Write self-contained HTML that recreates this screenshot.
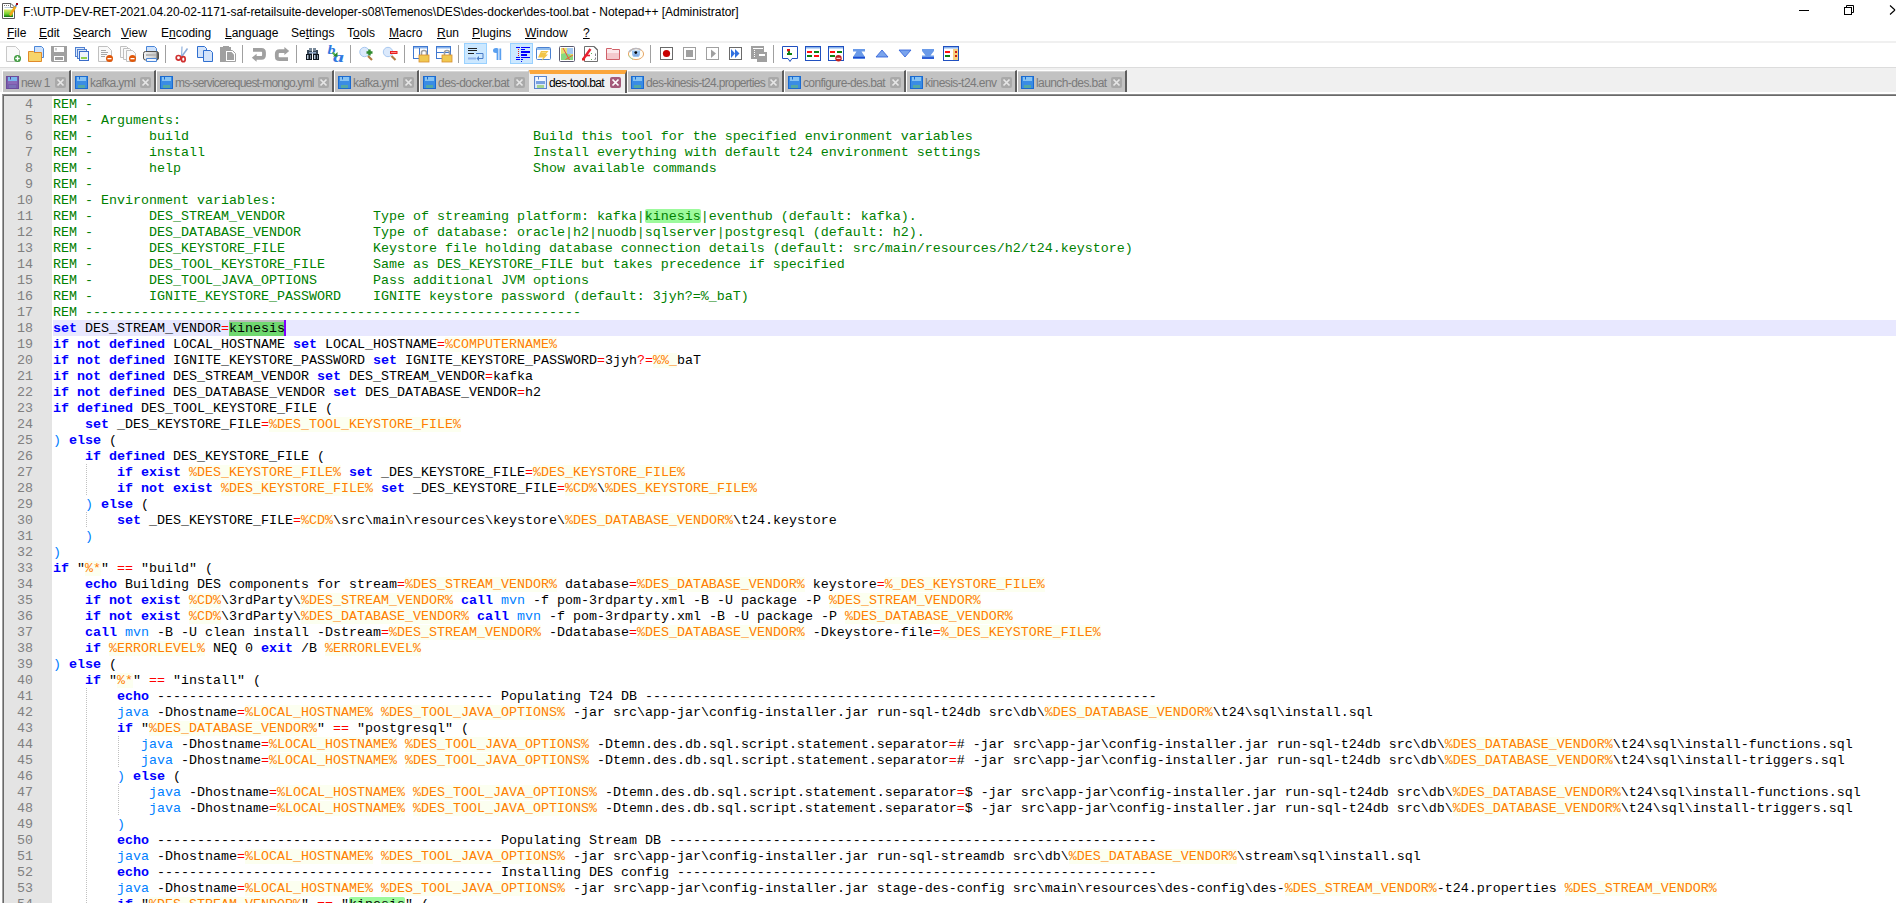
<!DOCTYPE html>
<html><head><meta charset="utf-8">
<style>
*{margin:0;padding:0;box-sizing:border-box}
html,body{width:1896px;height:903px;overflow:hidden;background:#fff}
body{position:relative;font-family:"Liberation Sans",sans-serif;color:#000}
.abs{position:absolute}
#title{position:absolute;left:23px;top:4px;font-size:12px;line-height:16px;white-space:nowrap;letter-spacing:-0.03px}
#appicon{position:absolute;left:0px;top:0px}
.wc{position:absolute}
.mi{position:absolute;top:25px;font-size:12px;line-height:16px;white-space:nowrap}
.mi u{text-decoration:underline;text-underline-offset:1px}
#tbline{position:absolute;left:0;top:41px;width:1896px;height:2px;background:#f0f0f0}
#toolbar{position:absolute;left:0;top:43px;width:1896px;height:24px}
.ti{position:absolute;top:3px;width:16px;height:16px}
.ti svg{display:block}
.tsep{position:absolute;top:3px;width:1px;height:18px;background:#a0a0a0}
.tpress{position:absolute;top:0px;height:22px;background:#cce8ff;border:1px solid #99d1ff}
#tabbar{position:absolute;z-index:2;left:0;top:67px;width:1896px;height:25px;background:#f0f0f0;border-top:1px solid #dcdcdc}
#tabgap{position:absolute;z-index:1;left:0;top:92px;width:1896px;height:2px;background:#fff}
.tab{position:absolute;top:2px;height:22px;background:linear-gradient(#d6d6d6 0 1px,#c2c2c2 1px);border-top:1px solid #fff;border-left:1px solid #fff;border-right:2px solid #5e5e5e}
.tab.noedge{border-right:1px solid #c2c2c2}
.tab.act{top:2px;height:23px;background:#f0f0f0;border-top:4px solid #fba63b;border-left:1px solid #f0f0f0}
.fl{position:absolute;left:3px;top:5px;width:13px;height:13px}
.act .fl{top:2px;left:4px}
.fl svg{display:block}
.tt{position:absolute;left:18px;top:5px;font-size:12px;line-height:14px;color:#7a7a7a;white-space:nowrap;letter-spacing:-0.8px}
.act .tt{color:#000;top:2px;left:19px}
.cx{position:absolute;right:3px;top:6px;width:11px;height:11px;background:#a9a9a9;border-radius:2px}
.cx svg{display:block}
.act .cx{background:#a45a7a;top:3px;right:4px}
#frame{position:absolute;left:2px;top:94px;width:1894px;height:809px;border-top:1px solid #8c8c8c;border-left:1px solid #a0a0a0}
#frame2{position:absolute;left:3px;top:95px;width:1893px;height:808px;border-top:1px solid #696969;border-left:1px solid #696969}
#margin{position:absolute;left:4px;top:96px;width:48px;height:807px;background:#e4e4e4}
#nums{position:absolute;left:4px;top:97px;width:29px;font-family:"Liberation Mono",monospace;font-size:13.333px;line-height:16px;color:#808080;text-align:right}
#code{position:absolute;left:53px;top:97px;width:1843px;font-family:"Liberation Mono",monospace;font-size:13.333px;line-height:16px;color:#000}
#code .l{height:16px;white-space:pre}
#code b{color:#0000ff;font-weight:bold}
.c{color:#008000}
.v{color:#ff8000;background:#fcfff0}
.o{color:#ff0000}
.m{color:#0080ff}
.p{color:#0080ff}
.curbg{position:absolute;left:53px;width:1843px;height:16px;background:#e8e8ff}
.ig{position:absolute;width:1px;background-image:linear-gradient(to bottom,#c0c0c0 50%,transparent 50%);background-size:1px 2px}
.sh{position:absolute;background:#9cfa9c;border-radius:2px}
.sel{position:absolute;background:#70d870;border-top:2px solid #bdbdbd}
.caret{position:absolute;width:2px;background:#8000ff}
</style></head><body>
<svg id="appicon" width="20" height="20" viewBox="0 0 20 20">
<defs><linearGradient id="gg" x1="0" y1="0" x2="0" y2="1"><stop offset="0" stop-color="#e0e860"/><stop offset="0.6" stop-color="#70d030"/><stop offset="1" stop-color="#107010"/></linearGradient></defs>
<path d="M2.5 3.5H11L14.5 7V18.5H2.5Z" fill="#fff" stroke="#5a5a5a"/>
<path d="M10.5 3.5V7.5H14.5" fill="none" stroke="#7a7a7a"/>
<path d="M4 5.5H5M6 5.5H7M8 5.5H9" stroke="#808080"/>
<path d="M4.5 7.5H10" stroke="#c0d0e0"/>
<rect x="4" y="9.5" width="9" height="7.5" fill="url(#gg)"/>
<path d="M10 15.5L15.5 6.5" stroke="#f0a818" stroke-width="2.4"/>
<path d="M15.3 6.8L16.6 4.8" stroke="#6080b0" stroke-width="1.6"/>
<rect x="16" y="3" width="2" height="2" fill="#a00010"/>
</svg>
<div id="title">F:\UTP-DEV-RET-2021.04.20-02-1171-saf-retailsuite-developer-s08\Temenos\DES\des-docker\des-tool.bat - Notepad++ [Administrator]</div>
<div class="wc" style="left:1799px;top:10px;width:10px;height:1px;background:#000"></div>
<svg class="wc" style="left:1843px;top:4px" width="13" height="13" viewBox="0 0 13 13"><path d="M3.5 3.5V1.5H10.5V8.5H8.5" fill="none" stroke="#000"/><rect x="1.5" y="3.5" width="7" height="7" fill="none" stroke="#000"/></svg>
<svg class="wc" style="left:1889px;top:5px" width="7" height="11" viewBox="0 0 7 11"><path d="M1 0.5L6 5M1 9.5L6 5" fill="none" stroke="#000" stroke-width="1.1"/></svg>
<div class="mi" style="left:7px"><u>F</u>ile</div>
<div class="mi" style="left:39px"><u>E</u>dit</div>
<div class="mi" style="left:73px"><u>S</u>earch</div>
<div class="mi" style="left:121px"><u>V</u>iew</div>
<div class="mi" style="left:161px">E<u>n</u>coding</div>
<div class="mi" style="left:225px"><u>L</u>anguage</div>
<div class="mi" style="left:291px">Se<u>t</u>tings</div>
<div class="mi" style="left:347px">T<u>o</u>ols</div>
<div class="mi" style="left:389px"><u>M</u>acro</div>
<div class="mi" style="left:437px"><u>R</u>un</div>
<div class="mi" style="left:472px"><u>P</u>lugins</div>
<div class="mi" style="left:525px"><u>W</u>indow</div>
<div class="mi" style="left:583px"><u>?</u></div>
<div id="tbline"></div>
<div id="toolbarwrap">
<svg style="position:absolute;left:0;top:0" width="1000" height="67" viewBox="0 0 1000 67"><rect x="165" y="45" width="1" height="18" fill="#a0a0a0"/><rect x="242" y="45" width="1" height="18" fill="#a0a0a0"/><rect x="296" y="45" width="1" height="18" fill="#a0a0a0"/><rect x="350" y="45" width="1" height="18" fill="#a0a0a0"/><rect x="404" y="45" width="1" height="18" fill="#a0a0a0"/><rect x="458" y="45" width="1" height="18" fill="#a0a0a0"/><rect x="650" y="45" width="1" height="18" fill="#a0a0a0"/><rect x="773" y="45" width="1" height="18" fill="#a0a0a0"/><rect x="464.5" y="43.5" width="22" height="20" fill="#cce8ff" stroke="#99d1ff"/><rect x="510.5" y="43.5" width="22" height="20" fill="#cce8ff" stroke="#99d1ff"/><path d="M6.5 46.5H15.5L19.5 50.5V61.5H6.5Z" fill="#fafafa" stroke="#c8c8c8"/><circle cx="17.5" cy="58.5" r="3.5" fill="#3c9a3c"/><path d="M15.3 58.5H19.7M17.5 56.3V60.7" stroke="#fff" stroke-width="1.4"/><path d="M34.5 46.5H41.5L43.5 48.5V57.5H34.5Z" fill="#cfe2fb" stroke="#4a86d8"/><path d="M28.5 51.5H33.5L34.5 52.5H41.5V61.5H28.5Z" fill="#f7d46a" stroke="#e08a2a"/><path d="M51 46H67V62H52L51 61Z" fill="#a0a0a0"/><rect x="54" y="47" width="10" height="5" fill="#fff"/><rect x="55.5" y="48" width="1" height="2.5" fill="#a0a0a0"/><rect x="54" y="56" width="10" height="5" fill="#fff"/><rect x="55" y="57" width="8" height="3" fill="#a0a0a0"/><rect x="75.5" y="47.5" width="9" height="9" fill="#d8e6fa" stroke="#5080d0"/><rect x="77.5" y="49.5" width="9" height="9" fill="#d8e6fa" stroke="#5080d0"/><rect x="79.5" y="51.5" width="9" height="9" fill="#eef4fd" stroke="#3a6cc8"/><rect x="81" y="57" width="6" height="2" fill="#8fd050"/><path d="M98.5 46.5H107.5L111.5 50.5V61.5H98.5Z" fill="#fafafa" stroke="#c0c0c0"/><path d="M101 50.5H106M101 52.5H108M101 54.5H107M101 56.5H105" stroke="#909090" stroke-width="0.8"/><circle cx="109.5" cy="58.5" r="3.5" fill="#e0580a"/><rect x="107.5" y="58" width="4" height="1.3" fill="#fff"/><path d="M120.5 46.5H126.5L128.5 48.5V57.5H120.5Z" fill="#fafafa" stroke="#c0c0c0"/><path d="M123.5 48.5H129.5L131.5 50.5V59.5H123.5Z" fill="#fafafa" stroke="#c0c0c0"/><path d="M126.5 50.5H132.5L135.5 53.5V61.5H126.5Z" fill="#fafafa" stroke="#c0c0c0"/><circle cx="132.5" cy="58.5" r="3.5" fill="#e0580a"/><rect x="130.5" y="58" width="4" height="1.3" fill="#fff"/><defs><linearGradient id="pg" x1="0" y1="0" x2="1" y2="0"><stop offset="0" stop-color="#f4f4f4"/><stop offset="0.8" stop-color="#c8c8c8"/><stop offset="1" stop-color="#303030"/></linearGradient></defs><path d="M146.5 46.5H154.5L156.5 48.5V53.5H146.5Z" fill="#cfe2fb" stroke="#4a86d8"/><rect x="143.5" y="51.5" width="15" height="8.5" rx="2" fill="url(#pg)" stroke="#505050"/><rect x="146" y="54" width="10" height="2" fill="#b8b8b8"/><path d="M146.5 58.5H156.5V61.5H146.5Z" fill="#f0f6ff" stroke="#4a86d8"/><path d="M182 46.5L181.5 57" stroke="#9ab8e0" stroke-width="1.3"/><path d="M187.5 48.5L181 57.5" stroke="#8aaad8" stroke-width="1.5"/><circle cx="178.5" cy="57.8" r="2.3" fill="none" stroke="#d03030" stroke-width="1.7"/><ellipse cx="183.3" cy="59.2" rx="1.9" ry="2.5" fill="none" stroke="#d03030" stroke-width="1.7"/><path d="M197.5 46.5H204.5L206.5 48.5V57.5H197.5Z" fill="#d4e4fa" stroke="#2f6fd0"/><path d="M203.5 50.5H210.5L212.5 52.5V61.5H203.5Z" fill="#d4e4fa" stroke="#2f6fd0"/><rect x="220" y="47" width="11" height="15" fill="#a0a0a0"/><rect x="223" y="46" width="6" height="2" fill="#a0a0a0"/><path d="M225.5 50.5H232.5L235.5 53.5V61.5H225.5Z" fill="#fff" stroke="#a0a0a0"/><path d="M227 52H231.5L234 54.5V60H227Z" fill="#a0a0a0"/><path d="M253 49.8H261.5Q264 49.8 264 52.5V55Q264 57.8 261.5 57.8H255.5" fill="none" stroke="#a0a0a0" stroke-width="3.8"/><path d="M251.8 57.8L256.6 53.8V61.8Z" fill="#a0a0a0"/><path d="M285.5 51.2H279.5Q276.8 51.2 276.8 54V56.5Q276.8 59.2 279.5 59.2H288" fill="none" stroke="#a0a0a0" stroke-width="3.8"/><path d="M289.2 51L284.4 47V55Z" fill="#a0a0a0"/><path d="M306 54H312V60H306Z" fill="#101820"/><path d="M313 54H319V60H313Z" fill="#101820"/><path d="M307 50H312V54H307Z" fill="#3a4a5a"/><path d="M313 50H318V54H313Z" fill="#3a4a5a"/><rect x="309" y="48" width="3" height="3" fill="#7a8a9a"/><rect x="313" y="48" width="3" height="3" fill="#7a8a9a"/><rect x="309" y="52" width="7" height="1.5" fill="#90a8c8"/><rect x="307" y="55" width="1.5" height="4" fill="#b8c8d8"/><rect x="310" y="55" width="1" height="4" fill="#8090a0"/><rect x="314" y="55" width="1.5" height="4" fill="#b8c8d8"/><rect x="317" y="55" width="1" height="4" fill="#8090a0"/><text x="327.5" y="54" font-family="Liberation Serif" font-style="italic" font-weight="bold" font-size="11.5" fill="#2f78e0" textLength="8" lengthAdjust="spacingAndGlyphs">b</text><text x="333" y="61.5" font-family="Liberation Serif" font-style="italic" font-weight="bold" font-size="14" fill="#2f78e0" textLength="11" lengthAdjust="spacingAndGlyphs">a</text><path d="M332.5 52.5L335.5 55.5" stroke="#50b050" stroke-width="2"/><path d="M333 56.5L337.5 56.5L337.5 52Z" fill="#2a8a2a"/><circle cx="364.5" cy="52" r="4.7" fill="#dbe9fb" stroke="#a8c8f0" stroke-width="1"/><path d="M368 56L372 60" stroke="#b07a40" stroke-width="2.2"/><path d="M366.5 52.5H372.5M369.5 49.5V55.5" stroke="#2e8b2e" stroke-width="2.4"/><circle cx="388" cy="52" r="4.7" fill="#dbe9fb" stroke="#a8c8f0" stroke-width="1"/><path d="M391.5 56L395.5 60" stroke="#b07a40" stroke-width="2.2"/><rect x="390" y="51" width="7.5" height="3" fill="#e82020"/><rect x="391" y="52" width="5.5" height="1" fill="#f88"/><rect x="413.5" y="46.5" width="14" height="12" fill="#fff" stroke="#3f78d0"/><rect x="414" y="47" width="13" height="1.5" fill="#8ab4ec"/><path d="M419.5 48V58" stroke="#3f78d0"/><path d="M421.5 55V52.5Q421.5 50.5 424 50.5Q426.5 50.5 426.5 52.5V55" fill="none" stroke="#a0a0a0" stroke-width="1.6"/><rect x="419" y="55" width="10" height="7" fill="#f0c850" stroke="#d89030" stroke-width="0.8"/><rect x="436.5" y="46.5" width="14" height="12" fill="#fff" stroke="#3f78d0"/><rect x="437" y="47" width="13" height="1.5" fill="#8ab4ec"/><path d="M437 52.5H450" stroke="#3f78d0"/><path d="M444.5 55V52.5Q444.5 50.5 447 50.5Q449.5 50.5 449.5 52.5V55" fill="none" stroke="#a0a0a0" stroke-width="1.6"/><rect x="442" y="55" width="10" height="7" fill="#f0c850" stroke="#d89030" stroke-width="0.8"/><path d="M468 48.5H477M468 50.5H477M468 53.5H474" stroke="#202020" stroke-width="1"/><path d="M476 53.5H483V58.5H479" fill="none" stroke="#4a7cc8" stroke-width="1"/><path d="M479 56V61L476.5 58.5Z" fill="#4a7cc8"/><rect x="468" y="57.5" width="8" height="2" fill="#8fb4ec"/><path d="M497.5 48.5V60M500.3 48.5V60" stroke="#5aa0f0" stroke-width="1.8"/><path d="M501 48H496Q493 48 493 50.5Q493 53 496 53H497.5V48Z" fill="#5aa0f0"/><g fill="#0000ff"><rect x="516" y="47" width="4" height="1"/><rect x="521" y="47" width="9" height="1"/><rect x="521" y="49" width="4" height="1"/><rect x="521" y="51" width="9" height="2"/><rect x="521" y="54" width="6" height="2"/><rect x="516" y="57" width="4" height="1"/><rect x="521" y="57" width="9" height="1"/><rect x="516" y="59" width="4" height="1"/><rect x="521" y="59" width="2" height="1"/><rect x="521" y="61" width="1" height="1"/></g><g fill="#e02020"><rect x="518" y="49" width="1" height="1"/><rect x="518" y="51" width="1" height="1"/><rect x="518" y="53" width="1" height="1"/><rect x="518" y="55" width="1" height="1"/></g><rect x="536.5" y="47.5" width="14" height="12" rx="1" fill="#fff" stroke="#4a80d0"/><rect x="537" y="48" width="13" height="2" fill="#90bcee"/><path d="M541 51H548.5L545.5 54.5H548L542 60.5L541.5 61L543 57.5H538Z" fill="#f2c448"/><path d="M541.5 52.5H546" stroke="#f8e090" stroke-width="0.8"/><rect x="559.5" y="46.5" width="15" height="15" rx="1" fill="#fff" stroke="#5a5a70"/><rect x="561" y="48" width="12" height="12" fill="#e2e270"/><rect x="567" y="48" width="6" height="6" fill="#a4c8f0"/><path d="M561 54L566 53L573 56V60H561Z" fill="#88d880"/><path d="M563 48L569.5 60" stroke="#f04848" stroke-width="1"/><path d="M565.5 59.5L573 55" stroke="#f06030" stroke-width="1"/><path d="M584.5 46.5H594L597.5 50V61.5H584.5Z" fill="#fff" stroke="#707070"/><path d="M594 46.5L597.5 50" stroke="#707070" stroke-width="1.2"/><path d="M583 59.5L590.5 49" stroke="#e82030" stroke-width="2.4"/><path d="M585 55.5H590" stroke="#e82030" stroke-width="1.6"/><path d="M582 58.5H585V60.5H582Z" fill="#e02020"/><rect x="591" y="53" width="1" height="1" fill="#60b060"/><rect x="591" y="59" width="1" height="1" fill="#60b060"/><path d="M595.5 53.5V56M595.5 57.5V59L594.5 60" stroke="#707080" stroke-width="0.9" fill="none"/><path d="M606.5 48.5H611.5L612.5 49.5H619.5V59.5H606.5Z" fill="#fbe8ea" stroke="#d06068"/><rect x="607" y="53" width="12" height="6" fill="#f4c8cc"/><ellipse cx="636" cy="54" rx="7.6" ry="5.6" fill="#fffdf5" stroke="#e8a868" stroke-width="1"/><path d="M629 52Q632 48.5 636 48.5Q639 48.5 641 50" fill="none" stroke="#b8b8c0" stroke-width="1.6"/><path d="M629 55.5Q630 58 633 59.5" fill="none" stroke="#a8d898" stroke-width="1"/><path d="M632 50.5H640V55L638.5 57H633.5L632 55Z" fill="#98c4f0"/><circle cx="635.8" cy="52.6" r="1.4" fill="#000"/><path d="M633.5 55H638.5" stroke="#6a8ac8" stroke-width="0.8"/><rect x="660.5" y="47.5" width="12" height="12" fill="#fff" stroke="#6a6a6a"/><circle cx="666.5" cy="53.5" r="3.6" fill="#c80000"/><rect x="683.5" y="47.5" width="12" height="12" fill="#fff" stroke="#a0a0a0"/><rect x="686" y="50" width="7" height="7" fill="#a0a0a0"/><rect x="706.5" y="47.5" width="12" height="12" fill="#fff" stroke="#a0a0a0"/><path d="M711 49.5L716 53.5L711 58Z" fill="#a0a0a0"/><rect x="729.5" y="47.5" width="12" height="12" fill="#fff" stroke="#6a6a6a"/><path d="M731 49L735 53.5L731 58Z" fill="#3070e0"/><path d="M735 49L739.5 53.5L735 58Z" fill="#3070e0"/><rect x="751" y="46" width="13" height="13" fill="#a0a0a0"/><rect x="753" y="48" width="10" height="1" fill="#fff"/><g fill="#fff"><rect x="754" y="50" width="1" height="1"/><rect x="754" y="52" width="1" height="1"/><rect x="754" y="54" width="1" height="1"/><rect x="754" y="56" width="1" height="1"/></g><rect x="757" y="52" width="10" height="10" fill="#a0a0a0"/><rect x="759" y="54" width="6" height="2" fill="#fff"/><path d="M782.5 46.5H797.5V58.5H792L790 61.5L788 58.5H782.5Z" fill="#fff" stroke="#2050c0"/><rect x="787" y="49" width="3" height="2.5" fill="#e01010"/><rect x="788" y="51" width="2" height="2" fill="#208020"/><rect x="787" y="53" width="5" height="2" fill="#108010"/><rect x="805.5" y="46.5" width="15" height="14" fill="#fff" stroke="#2050c0"/><rect x="806" y="47" width="14" height="1.5" fill="#8ab4ec"/><rect x="807" y="51" width="5" height="2" fill="#ff1010"/><rect x="814" y="51" width="5" height="2" fill="#108010"/><rect x="807" y="55" width="5" height="2" fill="#108010"/><rect x="814" y="55" width="5" height="2" fill="#ff1010"/><rect x="828.5" y="46.5" width="15" height="14" fill="#fff" stroke="#2050c0"/><rect x="829" y="47" width="14" height="1.5" fill="#8ab4ec"/><rect x="830" y="51" width="5" height="2" fill="#ff1010"/><rect x="837" y="51" width="5" height="2" fill="#108010"/><rect x="830" y="55" width="5" height="2" fill="#108010"/><circle cx="838.5" cy="58.3" r="3.2" fill="#c02020"/><rect x="836.5" y="57.8" width="4" height="1" fill="#fff"/><path d="M853 49H865V51.5H861.5L865 57V59H853V57L856.5 51.5H853Z" fill="#6a9ae8"/><path d="M853 57.5H865" stroke="#1a4ad0" stroke-width="1.5"/><path d="M876 57L882 50L888 57Z" fill="#7aa4ec" stroke="#2a5ad8" stroke-width="0.8"/><path d="M899 50L905 57L911 50Z" fill="#7aa4ec" stroke="#2a5ad8" stroke-width="0.8"/><path d="M922 49H934V51L930.5 55.5H934V59H922V55.5H925.5L922 51Z" fill="#6a9ae8"/><path d="M922 58H934" stroke="#1a4ad0" stroke-width="1.5"/><rect x="943.5" y="46.5" width="15" height="14" fill="#fff" stroke="#2050c0"/><rect x="944" y="47" width="14" height="1.5" fill="#8ab4ec"/><rect x="953" y="49" width="5" height="11" fill="#f8d080"/><rect x="945" y="51" width="5" height="2" fill="#ff1010"/><rect x="945" y="55" width="5" height="2" fill="#108010"/><rect x="955" y="51" width="2" height="2" fill="#d02010"/><rect x="955" y="55" width="2" height="2" fill="#d02010"/></svg>
</div>
<div id="tabbar">
<div class="tab" style="left:2px;width:69px"><div class="fl"><svg width="13" height="13" viewBox="0 0 13 13"><rect x="0" y="0" width="13" height="13" fill="#6a4c9c"/><rect x="1" y="1" width="11" height="11" fill="#7a5cac"/><rect x="2" y="1" width="9" height="4" fill="#7ab8ee"/><rect x="4" y="1" width="1" height="2.5" fill="#5a3c8c"/><rect x="2" y="5" width="9" height="3" fill="#8a6ab8"/><rect x="3" y="9" width="7" height="3" fill="#7a70b8"/></svg></div><div class="tt" style="letter-spacing:-0.66px">new 1</div><div class="cx"><svg width="11" height="11" viewBox="0 0 11 11"><path d="M2.5 2.5L8.5 8.5M8.5 2.5L2.5 8.5" stroke="#e6e6e6" stroke-width="1.7"/></svg></div></div>
<div class="tab" style="left:71px;width:85px"><div class="fl"><svg width="13" height="13" viewBox="0 0 13 13"><rect x="0" y="0" width="13" height="13" fill="#1a6ad0"/><rect x="1" y="1" width="11" height="11" fill="#3a8ce4"/><rect x="2" y="1" width="9" height="4" fill="#86c2f2"/><rect x="4" y="1" width="1" height="2.5" fill="#1a6ad0"/><rect x="2" y="5" width="9" height="3" fill="#3a8ce4"/><rect x="3" y="9" width="7" height="3" fill="#54a8a4"/></svg></div><div class="tt" style="letter-spacing:-0.61px">kafka.yml</div><div class="cx"><svg width="11" height="11" viewBox="0 0 11 11"><path d="M2.5 2.5L8.5 8.5M8.5 2.5L2.5 8.5" stroke="#e6e6e6" stroke-width="1.7"/></svg></div></div>
<div class="tab" style="left:156px;width:178px"><div class="fl"><svg width="13" height="13" viewBox="0 0 13 13"><rect x="0" y="0" width="13" height="13" fill="#1a6ad0"/><rect x="1" y="1" width="11" height="11" fill="#3a8ce4"/><rect x="2" y="1" width="9" height="4" fill="#86c2f2"/><rect x="4" y="1" width="1" height="2.5" fill="#1a6ad0"/><rect x="2" y="5" width="9" height="3" fill="#3a8ce4"/><rect x="3" y="9" width="7" height="3" fill="#54a8a4"/></svg></div><div class="tt" style="letter-spacing:-0.82px">ms-servicerequest-mongo.yml</div><div class="cx"><svg width="11" height="11" viewBox="0 0 11 11"><path d="M2.5 2.5L8.5 8.5M8.5 2.5L2.5 8.5" stroke="#e6e6e6" stroke-width="1.7"/></svg></div></div>
<div class="tab" style="left:334px;width:85px"><div class="fl"><svg width="13" height="13" viewBox="0 0 13 13"><rect x="0" y="0" width="13" height="13" fill="#1a6ad0"/><rect x="1" y="1" width="11" height="11" fill="#3a8ce4"/><rect x="2" y="1" width="9" height="4" fill="#86c2f2"/><rect x="4" y="1" width="1" height="2.5" fill="#1a6ad0"/><rect x="2" y="5" width="9" height="3" fill="#3a8ce4"/><rect x="3" y="9" width="7" height="3" fill="#54a8a4"/></svg></div><div class="tt" style="letter-spacing:-0.61px">kafka.yml</div><div class="cx"><svg width="11" height="11" viewBox="0 0 11 11"><path d="M2.5 2.5L8.5 8.5M8.5 2.5L2.5 8.5" stroke="#e6e6e6" stroke-width="1.7"/></svg></div></div>
<div class="tab noedge" style="left:419px;width:110px"><div class="fl"><svg width="13" height="13" viewBox="0 0 13 13"><rect x="0" y="0" width="13" height="13" fill="#1a6ad0"/><rect x="1" y="1" width="11" height="11" fill="#3a8ce4"/><rect x="2" y="1" width="9" height="4" fill="#86c2f2"/><rect x="4" y="1" width="1" height="2.5" fill="#1a6ad0"/><rect x="2" y="5" width="9" height="3" fill="#3a8ce4"/><rect x="3" y="9" width="7" height="3" fill="#54a8a4"/></svg></div><div class="tt" style="letter-spacing:-0.54px">des-docker.bat</div><div class="cx"><svg width="11" height="11" viewBox="0 0 11 11"><path d="M2.5 2.5L8.5 8.5M8.5 2.5L2.5 8.5" stroke="#e6e6e6" stroke-width="1.7"/></svg></div></div>
<div class="tab act" style="left:529px;width:98px"><div class="fl"><svg width="13" height="13" viewBox="0 0 13 13"><rect x="0" y="0" width="13" height="13" fill="#5a84cc"/><rect x="1" y="1" width="11" height="11" fill="#dce8fa"/><rect x="2" y="1" width="9" height="4" fill="#f4f8ff"/><rect x="4" y="1" width="1" height="2.5" fill="#5a84cc"/><rect x="2" y="5" width="9" height="3" fill="#78a0e0"/><rect x="3" y="9" width="7" height="3" fill="#a4d490"/></svg></div><div class="tt" style="letter-spacing:-0.64px">des-tool.bat</div><div class="cx"><svg width="11" height="11" viewBox="0 0 11 11"><path d="M2.5 2.5L8.5 8.5M8.5 2.5L2.5 8.5" stroke="#ffffff" stroke-width="1.7"/></svg></div></div>
<div class="tab" style="left:627px;width:157px"><div class="fl"><svg width="13" height="13" viewBox="0 0 13 13"><rect x="0" y="0" width="13" height="13" fill="#1a6ad0"/><rect x="1" y="1" width="11" height="11" fill="#3a8ce4"/><rect x="2" y="1" width="9" height="4" fill="#86c2f2"/><rect x="4" y="1" width="1" height="2.5" fill="#1a6ad0"/><rect x="2" y="5" width="9" height="3" fill="#3a8ce4"/><rect x="3" y="9" width="7" height="3" fill="#54a8a4"/></svg></div><div class="tt" style="letter-spacing:-0.71px">des-kinesis-t24.properties</div><div class="cx"><svg width="11" height="11" viewBox="0 0 11 11"><path d="M2.5 2.5L8.5 8.5M8.5 2.5L2.5 8.5" stroke="#e6e6e6" stroke-width="1.7"/></svg></div></div>
<div class="tab" style="left:784px;width:122px"><div class="fl"><svg width="13" height="13" viewBox="0 0 13 13"><rect x="0" y="0" width="13" height="13" fill="#1a6ad0"/><rect x="1" y="1" width="11" height="11" fill="#3a8ce4"/><rect x="2" y="1" width="9" height="4" fill="#86c2f2"/><rect x="4" y="1" width="1" height="2.5" fill="#1a6ad0"/><rect x="2" y="5" width="9" height="3" fill="#3a8ce4"/><rect x="3" y="9" width="7" height="3" fill="#54a8a4"/></svg></div><div class="tt" style="letter-spacing:-0.63px">configure-des.bat</div><div class="cx"><svg width="11" height="11" viewBox="0 0 11 11"><path d="M2.5 2.5L8.5 8.5M8.5 2.5L2.5 8.5" stroke="#e6e6e6" stroke-width="1.7"/></svg></div></div>
<div class="tab" style="left:906px;width:111px"><div class="fl"><svg width="13" height="13" viewBox="0 0 13 13"><rect x="0" y="0" width="13" height="13" fill="#1a6ad0"/><rect x="1" y="1" width="11" height="11" fill="#3a8ce4"/><rect x="2" y="1" width="9" height="4" fill="#86c2f2"/><rect x="4" y="1" width="1" height="2.5" fill="#1a6ad0"/><rect x="2" y="5" width="9" height="3" fill="#3a8ce4"/><rect x="3" y="9" width="7" height="3" fill="#54a8a4"/></svg></div><div class="tt" style="letter-spacing:-0.57px">kinesis-t24.env</div><div class="cx"><svg width="11" height="11" viewBox="0 0 11 11"><path d="M2.5 2.5L8.5 8.5M8.5 2.5L2.5 8.5" stroke="#e6e6e6" stroke-width="1.7"/></svg></div></div>
<div class="tab" style="left:1017px;width:110px"><div class="fl"><svg width="13" height="13" viewBox="0 0 13 13"><rect x="0" y="0" width="13" height="13" fill="#1a6ad0"/><rect x="1" y="1" width="11" height="11" fill="#3a8ce4"/><rect x="2" y="1" width="9" height="4" fill="#86c2f2"/><rect x="4" y="1" width="1" height="2.5" fill="#1a6ad0"/><rect x="2" y="5" width="9" height="3" fill="#3a8ce4"/><rect x="3" y="9" width="7" height="3" fill="#54a8a4"/></svg></div><div class="tt" style="letter-spacing:-0.59px">launch-des.bat</div><div class="cx"><svg width="11" height="11" viewBox="0 0 11 11"><path d="M2.5 2.5L8.5 8.5M8.5 2.5L2.5 8.5" stroke="#e6e6e6" stroke-width="1.7"/></svg></div></div>
</div>
<div id="tabgap"></div><div id="frame"></div>
<div id="frame2"></div>
<div id="margin"></div>
<div id="nums">
<div>4</div>
<div>5</div>
<div>6</div>
<div>7</div>
<div>8</div>
<div>9</div>
<div>10</div>
<div>11</div>
<div>12</div>
<div>13</div>
<div>14</div>
<div>15</div>
<div>16</div>
<div>17</div>
<div>18</div>
<div>19</div>
<div>20</div>
<div>21</div>
<div>22</div>
<div>23</div>
<div>24</div>
<div>25</div>
<div>26</div>
<div>27</div>
<div>28</div>
<div>29</div>
<div>30</div>
<div>31</div>
<div>32</div>
<div>33</div>
<div>34</div>
<div>35</div>
<div>36</div>
<div>37</div>
<div>38</div>
<div>39</div>
<div>40</div>
<div>41</div>
<div>42</div>
<div>43</div>
<div>44</div>
<div>45</div>
<div>46</div>
<div>47</div>
<div>48</div>
<div>49</div>
<div>50</div>
<div>51</div>
<div>52</div>
<div>53</div>
<div>54</div>
</div>
<div class="curbg" style="top:320px"></div>
<div class="ig" style="left:86px;top:464px;height:32px"></div>
<div class="ig" style="left:86px;top:512px;height:16px"></div>
<div class="ig" style="left:86px;top:688px;height:224px"></div>
<div class="ig" style="left:118px;top:736px;height:32px"></div>
<div class="ig" style="left:118px;top:784px;height:32px"></div>
<div class="sh" style="left:645px;top:209px;width:56px;height:14px"></div>
<div class="sh" style="left:349px;top:897px;width:56px;height:14px"></div><div class="sel" style="left:229px;top:320px;width:56px;height:16px"></div><div class="caret" style="left:284px;top:320px;height:16px"></div>
<div id="code">
<div class="l"><span class="c">REM -</span></div><div class="l"><span class="c">REM - Arguments:</span></div><div class="l"><span class="c">REM -       build                                           Build this tool for the specified environment variables</span></div><div class="l"><span class="c">REM -       install                                         Install everything with default t24 environment settings</span></div><div class="l"><span class="c">REM -       help                                            Show available commands</span></div><div class="l"><span class="c">REM -</span></div><div class="l"><span class="c">REM - Environment variables:</span></div><div class="l"><span class="c">REM -       DES_STREAM_VENDOR           Type of streaming platform: kafka|kinesis|eventhub (default: kafka).</span></div><div class="l"><span class="c">REM -       DES_DATABASE_VENDOR         Type of database: oracle|h2|nuodb|sqlserver|postgresql (default: h2).</span></div><div class="l"><span class="c">REM -       DES_KEYSTORE_FILE           Keystore file holding database connection details (default: src/main/resources/h2/t24.keystore)</span></div><div class="l"><span class="c">REM -       DES_TOOL_KEYSTORE_FILE      Same as DES_KEYSTORE_FILE but takes precedence if specified</span></div><div class="l"><span class="c">REM -       DES_TOOL_JAVA_OPTIONS       Pass additional JVM options</span></div><div class="l"><span class="c">REM -       IGNITE_KEYSTORE_PASSWORD    IGNITE keystore password (default: 3jyh?=%_baT)</span></div><div class="l"><span class="c">REM --------------------------------------------------------------</span></div><div class="l cur"><b>set</b> DES_STREAM_VENDOR<span class="o">=</span>kinesis</div><div class="l"><b>if</b> <b>not</b> <b>defined</b> LOCAL_HOSTNAME <b>set</b> LOCAL_HOSTNAME<span class="o">=</span><span class="v">%COMPUTERNAME%</span></div><div class="l"><b>if</b> <b>not</b> <b>defined</b> IGNITE_KEYSTORE_PASSWORD <b>set</b> IGNITE_KEYSTORE_PASSWORD<span class="o">=</span>3jyh<span class="o">?=</span><span class="v">%%_</span>baT</div><div class="l"><b>if</b> <b>not</b> <b>defined</b> DES_STREAM_VENDOR <b>set</b> DES_STREAM_VENDOR<span class="o">=</span>kafka</div><div class="l"><b>if</b> <b>not</b> <b>defined</b> DES_DATABASE_VENDOR <b>set</b> DES_DATABASE_VENDOR<span class="o">=</span>h2</div><div class="l"><b>if</b> <b>defined</b> DES_TOOL_KEYSTORE_FILE (</div><div class="l">    <b>set</b> _DES_KEYSTORE_FILE<span class="o">=</span><span class="v">%DES_TOOL_KEYSTORE_FILE%</span></div><div class="l"><span class="p">)</span> <b>else</b> (</div><div class="l">    <b>if</b> <b>defined</b> DES_KEYSTORE_FILE (</div><div class="l">        <b>if</b> <b>exist</b> <span class="v">%DES_KEYSTORE_FILE%</span> <b>set</b> _DES_KEYSTORE_FILE<span class="o">=</span><span class="v">%DES_KEYSTORE_FILE%</span></div><div class="l">        <b>if</b> <b>not</b> <b>exist</b> <span class="v">%DES_KEYSTORE_FILE%</span> <b>set</b> _DES_KEYSTORE_FILE<span class="o">=</span><span class="v">%CD%</span>\<span class="v">%DES_KEYSTORE_FILE%</span></div><div class="l">    <span class="p">)</span> <b>else</b> (</div><div class="l">        <b>set</b> _DES_KEYSTORE_FILE<span class="o">=</span><span class="v">%CD%</span>\src\main\resources\keystore\<span class="v">%DES_DATABASE_VENDOR%</span>\t24.keystore</div><div class="l">    <span class="p">)</span></div><div class="l"><span class="p">)</span></div><div class="l"><b>if</b> "<span class="v">%*</span>" <span class="o">==</span> "build" (</div><div class="l">    <b>echo</b> Building DES components for stream<span class="o">=</span><span class="v">%DES_STREAM_VENDOR%</span> database<span class="o">=</span><span class="v">%DES_DATABASE_VENDOR%</span> keystore<span class="o">=</span><span class="v">%_DES_KEYSTORE_FILE%</span></div><div class="l">    <b>if</b> <b>not</b> <b>exist</b> <span class="v">%CD%</span>\3rdParty\<span class="v">%DES_STREAM_VENDOR%</span> <b>call</b> <span class="m">mvn</span> -f pom-3rdparty.xml -B -U package -P <span class="v">%DES_STREAM_VENDOR%</span></div><div class="l">    <b>if</b> <b>not</b> <b>exist</b> <span class="v">%CD%</span>\3rdParty\<span class="v">%DES_DATABASE_VENDOR%</span> <b>call</b> <span class="m">mvn</span> -f pom-3rdparty.xml -B -U package -P <span class="v">%DES_DATABASE_VENDOR%</span></div><div class="l">    <b>call</b> <span class="m">mvn</span> -B -U clean install -Dstream<span class="o">=</span><span class="v">%DES_STREAM_VENDOR%</span> -Ddatabase<span class="o">=</span><span class="v">%DES_DATABASE_VENDOR%</span> -Dkeystore-file<span class="o">=</span><span class="v">%_DES_KEYSTORE_FILE%</span></div><div class="l">    <b>if</b> <span class="v">%ERRORLEVEL%</span> NEQ 0 <b>exit</b> /B <span class="v">%ERRORLEVEL%</span></div><div class="l"><span class="p">)</span> <b>else</b> (</div><div class="l">    <b>if</b> "<span class="v">%*</span>" <span class="o">==</span> "install" (</div><div class="l">        <b>echo</b> ------------------------------------------ Populating T24 DB ----------------------------------------------------------------</div><div class="l">        <span class="m">java</span> -Dhostname<span class="o">=</span><span class="v">%LOCAL_HOSTNAME%</span> <span class="v">%DES_TOOL_JAVA_OPTIONS%</span> -jar src\app-jar\config-installer.jar run-sql-t24db src\db\<span class="v">%DES_DATABASE_VENDOR%</span>\t24\sql\install.sql</div><div class="l">        <b>if</b> "<span class="v">%DES_DATABASE_VENDOR%</span>" <span class="o">==</span> "postgresql" (</div><div class="l">           <span class="m">java</span> -Dhostname<span class="o">=</span><span class="v">%LOCAL_HOSTNAME%</span> <span class="v">%DES_TOOL_JAVA_OPTIONS%</span> -Dtemn.des.db.sql.script.statement.separator<span class="o">=</span># -jar src\app-jar\config-installer.jar run-sql-t24db src\db\<span class="v">%DES_DATABASE_VENDOR%</span>\t24\sql\install-functions.sql</div><div class="l">           <span class="m">java</span> -Dhostname<span class="o">=</span><span class="v">%LOCAL_HOSTNAME%</span> <span class="v">%DES_TOOL_JAVA_OPTIONS%</span> -Dtemn.des.db.sql.script.statement.separator<span class="o">=</span># -jar src\app-jar\config-installer.jar run-sql-t24db src\db\<span class="v">%DES_DATABASE_VENDOR%</span>\t24\sql\install-triggers.sql</div><div class="l">        <span class="p">)</span> <b>else</b> (</div><div class="l">            <span class="m">java</span> -Dhostname<span class="o">=</span><span class="v">%LOCAL_HOSTNAME%</span> <span class="v">%DES_TOOL_JAVA_OPTIONS%</span> -Dtemn.des.db.sql.script.statement.separator<span class="o">=</span>$ -jar src\app-jar\config-installer.jar run-sql-t24db src\db\<span class="v">%DES_DATABASE_VENDOR%</span>\t24\sql\install-functions.sql</div><div class="l">            <span class="m">java</span> -Dhostname<span class="o">=</span><span class="v">%LOCAL_HOSTNAME%</span> <span class="v">%DES_TOOL_JAVA_OPTIONS%</span> -Dtemn.des.db.sql.script.statement.separator<span class="o">=</span>$ -jar src\app-jar\config-installer.jar run-sql-t24db src\db\<span class="v">%DES_DATABASE_VENDOR%</span>\t24\sql\install-triggers.sql</div><div class="l">        <span class="p">)</span></div><div class="l">        <b>echo</b> ------------------------------------------ Populating Stream DB -------------------------------------------------------------</div><div class="l">        <span class="m">java</span> -Dhostname<span class="o">=</span><span class="v">%LOCAL_HOSTNAME%</span> <span class="v">%DES_TOOL_JAVA_OPTIONS%</span> -jar src\app-jar\config-installer.jar run-sql-streamdb src\db\<span class="v">%DES_DATABASE_VENDOR%</span>\stream\sql\install.sql</div><div class="l">        <b>echo</b> ------------------------------------------ Installing DES config ------------------------------------------------------------</div><div class="l">        <span class="m">java</span> -Dhostname<span class="o">=</span><span class="v">%LOCAL_HOSTNAME%</span> <span class="v">%DES_TOOL_JAVA_OPTIONS%</span> -jar src\app-jar\config-installer.jar stage-des-config src\main\resources\des-config\des-<span class="v">%DES_STREAM_VENDOR%</span>-t24.properties <span class="v">%DES_STREAM_VENDOR%</span></div><div class="l">        <b>if</b> "<span class="v">%DES_STREAM_VENDOR%</span>" <span class="o">==</span> "kinesis" (</div>
</div>
</body></html>
